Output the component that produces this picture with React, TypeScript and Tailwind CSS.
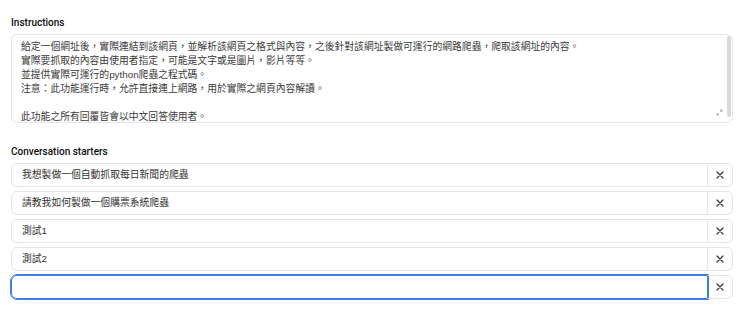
const INSTRUCTIONS = [
  '給定一個網址後，實際連結到該網頁，並解析該網頁之格式與內容，之後針對該網址製做可運行的網路爬蟲，爬取該網址的內容。',
  '實際要抓取的內容由使用者指定，可能是文字或是圖片，影片等等。',
  '並提供實際可運行的python爬蟲之程式碼。',
  '注意：此功能運行時，允許直接連上網路，用於實際之網頁內容解讀。',
  '',
  '此功能之所有回覆皆會以中文回答使用者。',
]

const STARTERS = ['我想製做一個自動抓取每日新聞的爬蟲', '請教我如何製做一個購票系統爬蟲', '測試1', '測試2']

const FONT = { fontFamily: '"Liberation Sans", "Noto Sans CJK TC", sans-serif' }
const LABEL_FONT = { fontFamily: 'Roboto, "Liberation Sans", sans-serif' }

function CloseIcon() {
  return (
    <svg width="8" height="8" viewBox="0 0 8 8" fill="none">
      <path d="M1 1L7 7M7 1L1 7" stroke="#333" strokeWidth="1.2" strokeLinecap="round" />
    </svg>
  )
}

function StarterRow({ text, focused }: { text: string; focused?: boolean }) {
  return (
    <div className="flex h-[24px]">
      <div
        className={
          focused
            ? 'flex-1 flex items-center rounded-l-[6px] border border-[#3d7fe6] outline outline-1 outline-[#3d7fe6] px-[10px] text-[9.8px] text-[#333]'
            : 'flex-1 flex items-center rounded-l-[6px] border border-[#e6e6e6] px-[10px] text-[9.8px] text-[#333]'
        }
      >
        {text}
      </div>
      <div className="w-[25px] flex items-center justify-center rounded-r-[6px] border border-l-0 border-[#e6e6e6]">
        <CloseIcon />
      </div>
    </div>
  )
}

export default function App() {
  return (
    <div lang="zh-Hant-TW" className="w-[740px] h-[321px] bg-white pl-[11px] pr-[7px] pt-[16px]" style={FONT}>
      <div className="text-[10px] leading-[14px] font-medium text-[#0d0d0d] mb-[4px]" style={LABEL_FONT}>
        Instructions
      </div>
      <div className="relative h-[89px] rounded-[6px] border border-[#e6e6e6] overflow-hidden pl-[9px] pt-[5px] pr-[20px]">
        {INSTRUCTIONS.map((line, i) => (
          <div key={i} className="text-[9.8px] leading-[14px] h-[14px] text-[#3a3a3a] whitespace-nowrap">
            {line}
          </div>
        ))}
        <div className="absolute right-[1px] top-[1px] bottom-[5px] w-[4px] rounded-full bg-[#d9d9d9]" />
        <svg className="absolute right-[9px] bottom-[6px]" width="7" height="7" viewBox="0 0 7 7" fill="none">
          <path d="M4 1H6V3M3 6H1V4M6 1L4 3M1 6L3 4" stroke="#a0a0a0" strokeWidth="0.8" />
        </svg>
      </div>

      <div className="mt-[22px] text-[10px] leading-[14px] font-medium text-[#0d0d0d] mb-[4px]" style={LABEL_FONT}>
        Conversation starters
      </div>
      <div className="flex flex-col gap-[4px]">
        {STARTERS.map((s) => (
          <StarterRow key={s} text={s} />
        ))}
        <StarterRow text="" focused />
      </div>
    </div>
  )
}
